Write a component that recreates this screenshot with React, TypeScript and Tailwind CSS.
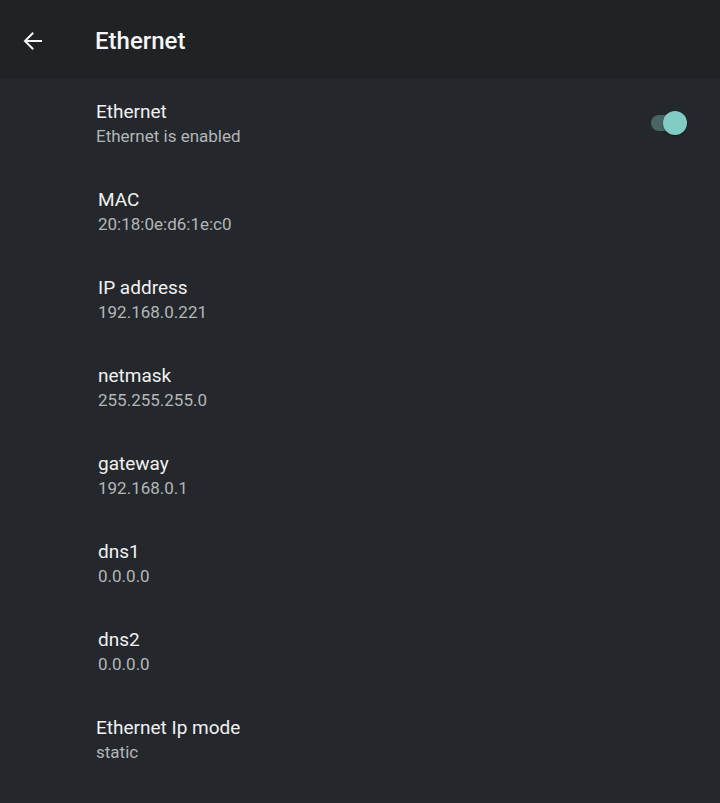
import React from "react";

const rows: { t: string; s: string }[] = [
  { t: "MAC", s: "20:18:0e:d6:1e:c0" },
  { t: "IP address", s: "192.168.0.221" },
  { t: "netmask", s: "255.255.255.0" },
  { t: "gateway", s: "192.168.0.1" },
  { t: "dns1", s: "0.0.0.0" },
  { t: "dns2", s: "0.0.0.0" },
];

function Row({ t, s, pl }: { t: string; s: string; pl: string }) {
  return (
    <div className={`h-[88px] flex flex-col justify-center pt-[2px] ${pl}`}>
      <div className="text-[19px] leading-[25px] text-[#f1f1f1]">{t}</div>
      <div className="text-[17px] leading-[25px] text-[#b3b6b8]">{s}</div>
    </div>
  );
}

export default function App() {
  return (
    <div
      className="w-[720px] h-[803px] bg-[#24282c] overflow-hidden"
      style={{ fontFamily: "Roboto, 'Noto Sans', sans-serif" }}
    >
      <div className="h-[79px] bg-[#202326] flex items-center pt-[2px]">
        <div className="w-[95px] flex items-center pl-[21px]">
          <svg width="24" height="24" viewBox="0 0 24 24" fill="none">
            <path
              d="M20 12H4.5M11.5 4.5L4 12l7.5 7.5"
              stroke="#f5f5f5"
              strokeWidth="2"
              strokeLinecap="square"
            />
          </svg>
        </div>
        <div className="text-[24px] font-medium text-[#f5f5f5] leading-none">Ethernet</div>
      </div>
      <div className="h-[88px] flex items-center justify-between pl-[96px] pr-[33px]">
        <div className="flex flex-col justify-center pt-[2px]">
          <div className="text-[19px] leading-[25px] text-[#f1f1f1]">Ethernet</div>
          <div className="text-[17px] leading-[25px] text-[#b3b6b8]">Ethernet is enabled</div>
        </div>
        <div className="relative w-[36px] h-[24px] flex items-center">
          <div className="absolute left-0 w-[32px] h-[16px] rounded-full bg-[#476562]"></div>
          <div className="absolute right-0 w-[24px] h-[24px] rounded-full bg-[#80cbc4] shadow-[0_1px_2px_rgba(0,0,0,0.4)]"></div>
        </div>
      </div>
      {rows.map((r) => (
        <Row key={r.t} t={r.t} s={r.s} pl="pl-[98px]" />
      ))}
      <Row t="Ethernet Ip mode" s="static" pl="pl-[96px]" />
    </div>
  );
}
